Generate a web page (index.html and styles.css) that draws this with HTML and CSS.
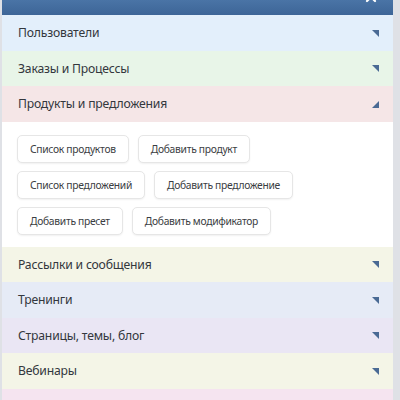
FILE: index.html
```html
<!DOCTYPE html>
<html lang="ru">
<head>
  <meta charset="UTF-8">
  <title>Меню</title>
  <link rel="stylesheet" href="styles.css">
</head>
<body>
  <div class="panel">
    <div class="panel-head">
      <svg class="close" width="12" height="12" viewBox="0 0 12 12">
        <path d="M2 2 L10 10 M10 2 L2 10" stroke="#fff" stroke-width="2.2" stroke-linecap="round"/>
      </svg>
    </div>

    <div class="section sec-users">
      <span>Пользователи</span><i class="arrow"></i>
    </div>
    <div class="section sec-orders">
      <span>Заказы и Процессы</span><i class="arrow"></i>
    </div>
    <div class="section sec-products open">
      <span>Продукты и предложения</span><i class="arrow"></i>
    </div>
    <div class="section-body">
      <div class="btn-row">
        <a class="btn">Список продуктов</a>
        <a class="btn">Добавить продукт</a>
      </div>
      <div class="btn-row">
        <a class="btn">Список предложений</a>
        <a class="btn">Добавить предложение</a>
      </div>
      <div class="btn-row">
        <a class="btn">Добавить пресет</a>
        <a class="btn">Добавить модификатор</a>
      </div>
    </div>
    <div class="section sec-mail">
      <span>Рассылки и сообщения</span><i class="arrow"></i>
    </div>
    <div class="section sec-train">
      <span>Тренинги</span><i class="arrow"></i>
    </div>
    <div class="section sec-pages">
      <span>Страницы, темы, блог</span><i class="arrow"></i>
    </div>
    <div class="section sec-web">
      <span>Вебинары</span><i class="arrow"></i>
    </div>
    <div class="section sec-more">
      <span></span><i class="arrow"></i>
    </div>
  </div>
</body>
</html>
```

FILE: styles.css
```css
body {
  margin: 0;
  background-color: #dfe1e6;
  font-family: "Noto Sans", "Open Sans", sans-serif;
  color: #33373d;
}
.panel {
  margin-left: 2px;
  width: 391px;
  height: 400px;
  overflow: hidden;
}
.panel-head {
  height: 15px;
  background: linear-gradient(#4a74a6, #3d6597);
  display: flex;
  justify-content: flex-end;
  overflow: hidden;
}
.close {
  margin-top: -9px;
  margin-right: 16px;
}
.section {
  height: 35.5px;
  box-sizing: border-box;
  padding: 0 14px 0 16px;
  display: flex;
  align-items: center;
  justify-content: space-between;
  font-size: 12.2px;
  letter-spacing: -0.2px;
}
.arrow {
  width: 0;
  height: 0;
  border-top: 7px solid #4a6a94;
  border-left: 7px solid transparent;
  margin-top: 1px;
}
.open .arrow {
  border-top: 0;
  border-bottom: 7px solid #4a6a94;
}
.sec-users { background-color: #e3effb; }
.sec-orders { background-color: #e8f5e8; }
.sec-products { background-color: #f5e6e7; }
.sec-mail { background-color: #f4f5e7; }
.sec-train { background-color: #e6ebf6; }
.sec-pages { background-color: #eae6f4; }
.sec-web { background-color: #f4f5e7; }
.sec-more { background-color: #f5e4f0; }
.section-body {
  background-color: #fff;
  padding: 13px 15px 12px;
  display: flex;
  flex-direction: column;
  gap: 8px;
}
.btn-row {
  display: flex;
  gap: 9px;
}
.btn {
  display: inline-block;
  height: 28px;
  line-height: 27px;
  box-sizing: border-box;
  padding: 0 12px;
  border: 1px solid #e6e6e6;
  border-radius: 5px;
  background-color: #fff;
  box-shadow: 0 1px 2px rgba(0, 0, 0, 0.06);
  font-size: 10.3px;
  letter-spacing: -0.3px;
  color: #3a3d42;
  cursor: pointer;
}
```
